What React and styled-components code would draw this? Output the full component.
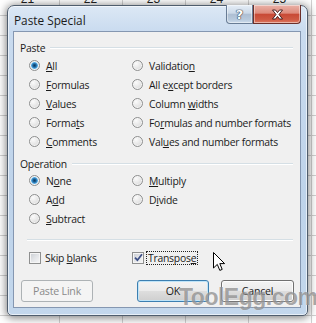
import React from 'react';
import styled, { createGlobalStyle } from 'styled-components';

const Global = createGlobalStyle`
  html, body { margin: 0; padding: 0; }
  body {
    width: 316px; height: 323px; overflow: hidden; background: #fff;
    font-family: "Open Sans", "Noto Sans", sans-serif;
  }
`;

const Sheet = styled.div`
  width: 316px;
  height: 323px;
  overflow: hidden;
  background-color: #fff;
  background-image:
    linear-gradient(to right, #d2d2d2 1px, transparent 1px),
    linear-gradient(to bottom, #d2d2d2 1px, transparent 1px);
  background-size: 63px 20px;
  background-position: 59px 15px;
`;

const NumberRow = styled.div`
  height: 5px;
  overflow: hidden;
  display: grid;
  grid-template-columns: repeat(5, 63px);
  margin-left: -4px;
`;

const Num = styled.span`
  display: block;
  margin-top: -7px;
  text-align: center;
  font-family: "Liberation Sans", Arial, sans-serif;
  font-size: 12px;
  line-height: 12px;
  color: #222;
`;

const Window = styled.div`
  position: relative;
  margin-left: 7px;
  width: 301px;
  height: 311px;
  box-sizing: border-box;
  border: 1px solid #4f5d6d;
  border-radius: 7px 7px 5px 5px;
  background: linear-gradient(to bottom, #dce8f5 0px, #c9dbef 26px, #bed3ea 60%, #c3d7ec 100%);
  box-shadow: 0 1px 8px 1px rgba(0, 0, 0, 0.5), inset 0 0 0 1px rgba(255, 255, 255, 0.6);
  display: flex;
  flex-direction: column;
  padding: 0 6px 7px 5px;
`;

const TitleBar = styled.div`
  height: 25px;
  display: flex;
  align-items: flex-start;
  justify-content: space-between;
  flex: none;
`;

const Title = styled.span`
  margin: 6px 0 0 1px;
  font-size: 11.8px;
  line-height: 16px;
  color: #1b1b1b;
`;

const CaptionButtons = styled.div`
  display: flex;
  margin-top: -1px;
  height: 19px;
`;

const CaptionButton = styled.div`
  box-sizing: border-box;
  height: 19px;
  width: ${p => p.$w}px;
  display: flex;
  align-items: center;
  justify-content: center;
  border: 1px solid ${p => (p.$close ? '#6b2f2a' : '#687c95')};
  border-top: none;
  border-radius: ${p => (p.$close ? '0 0 4px 0' : '0 0 0 4px')};
  background: ${p =>
    p.$close
      ? 'linear-gradient(to bottom, #eab2a8 0%, #de8b7c 45%, #c84a36 52%, #cf5943 80%, #dd7a62 100%)'
      : 'linear-gradient(to bottom, #e6eef7 0%, #cbd9e8 45%, #aebfd3 52%, #b7c9dc 80%, #cddcec 100%)'};
  box-shadow: inset 0 0 0 1px rgba(255, 255, 255, 0.45);
`;

const HelpGlyph = styled.span`
  font-family: "DejaVu Sans", sans-serif;
  font-weight: bold;
  font-size: 13px;
  line-height: 13px;
  color: #fff;
  text-shadow: 0 0 1px #2b3a4c, 0 0 1px #2b3a4c, 0 0 1px #2b3a4c;
`;

const Client = styled.div`
  flex: 1;
  border: 1px solid #8597b1;
  background: #f0f0f0;
  display: flex;
  flex-direction: column;
`;

const GroupHeader = styled.div`
  display: flex;
  align-items: center;
  gap: 5px;
  padding: 0 7px 0 6px;
  margin-top: ${p => p.$top}px;
  height: 14px;
`;

const Label = styled.span`
  font-size: 10.4px;
  line-height: 14px;
  color: #1b1b1b;
  letter-spacing: -0.25px;
  white-space: nowrap;
`;

const Rule = styled.div`
  flex: 1;
  height: 0;
  border-top: 1px solid #d5dfe5;
  border-bottom: 1px solid #fff;
`;

const Divider = styled.div`
  margin: ${p => p.$top}px 7px 0 13px;
  border-top: 1px solid #d5dfe5;
  border-bottom: 1px solid #fff;
`;

const OptionGrid = styled.div`
  display: grid;
  grid-template-columns: 103px 1fr;
  grid-template-rows: repeat(${p => p.$rows}, 19px);
  grid-auto-flow: column;
  padding-left: 15px;
  margin-top: ${p => p.$top}px;
`;

const Option = styled.div`
  display: flex;
  align-items: center;
  gap: ${p => p.$gap}px;
`;

const Radio = styled.span`
  flex: none;
  width: 11px;
  height: 11px;
  box-sizing: border-box;
  border-radius: 50%;
  border: 1px solid #8e8f8f;
  background: ${p =>
    p.$checked
      ? 'radial-gradient(circle at 50% 50%, #0c3a60 0, #1b5f95 1.5px, #4ea7e2 3px, #9fcff0 3.6px, #e3e3e3 4px, #f7f7f7 100%)'
      : 'radial-gradient(circle at 35% 30%, #fbfbfb 0, #e9e9e9 45%, #d0d0d0 100%)'};
  box-shadow: inset 0 0 0 1px #f6f6f6;
`;

const Check = styled.span`
  flex: none;
  width: 12px;
  height: 12px;
  box-sizing: border-box;
  border: 1px solid #8e8f8f;
  background: linear-gradient(135deg, #c9ccd2 0%, #e3e5e8 50%, #f7f7f7 100%);
  box-shadow: inset 0 0 0 1px #f5f5f5;
  display: flex;
  align-items: center;
  justify-content: center;
`;

const Focusable = styled.span`
  font-size: 10.4px;
  line-height: 12px;
  color: #1b1b1b;
  letter-spacing: -0.25px;
  padding: 0 1px;
  border: 1px dotted ${p => (p.$focus ? '#222' : 'transparent')};
  white-space: nowrap;
`;

const Key = styled.span`
  text-decoration: underline;
  text-underline-offset: 1px;
`;

const ButtonRow = styled.div`
  display: flex;
  justify-content: space-between;
  padding: 0 6px 0 7px;
  margin-top: 13px;
`;

const ButtonGroup = styled.div`
  display: flex;
  gap: 12px;
`;

const PushButton = styled.div`
  box-sizing: border-box;
  width: ${p => p.$w || 72}px;
  height: 22px;
  border-radius: 3px;
  display: flex;
  align-items: center;
  justify-content: center;
  font-size: 10.6px;
  letter-spacing: -0.2px;
  color: ${p => (p.$disabled ? '#8a8a8a' : '#1b1b1b')};
  border: 1px solid ${p => (p.$disabled ? '#adb2b5' : p.$default ? '#3c7fb1' : '#707070')};
  background: ${p =>
    p.$disabled
      ? '#f4f4f4'
      : 'linear-gradient(to bottom, #f3f3f3 0%, #ebebeb 48%, #dddddd 52%, #cfcfcf 100%)'};
  box-shadow: ${p =>
    p.$disabled ? 'none' : p.$default ? 'inset 0 0 0 1px #bfe4f8' : 'inset 0 0 0 1px #fcfcfc'};
`;

const Watermark = styled.div`
  position: absolute;
  left: 171px;
  top: 278px;
  font-family: "Liberation Sans", Arial, sans-serif;
  font-weight: bold;
  font-size: 23px;
  letter-spacing: -0.5px;
  color: rgba(95, 95, 95, 0.55);
  text-shadow: 0 0 1px rgba(255, 255, 255, 0.6);
  pointer-events: none;
`;

const Cursor = styled.svg`
  position: absolute;
  left: 205px;
  top: 246px;
`;

const pasteOptions = [
  [<><Key>A</Key>ll</>, true],
  [<><Key>F</Key>ormulas</>],
  [<><Key>V</Key>alues</>],
  [<>Forma<Key>t</Key>s</>],
  [<><Key>C</Key>omments</>],
  [<>Validatio<Key>n</Key></>],
  [<>All e<Key>x</Key>cept borders</>],
  [<>Column <Key>w</Key>idths</>],
  [<>Fo<Key>r</Key>mulas and number formats</>],
  [<>Val<Key>u</Key>es and number formats</>],
];

const opOptions = [
  [<>N<Key>o</Key>ne</>, true],
  [<>A<Key>d</Key>d</>],
  [<><Key>S</Key>ubtract</>],
  [<><Key>M</Key>ultiply</>],
  [<>D<Key>i</Key>vide</>],
];

function RadioOption({ label, checked }) {
  return (
    <Option $gap={6}>
      <Radio $checked={checked} />
      <Label>{label}</Label>
    </Option>
  );
}

function CheckOption({ label, checked, focus }) {
  return (
    <Option $gap={2}>
      <Check>
        {checked && (
          <svg width="9" height="9" viewBox="0 0 9 9">
            <path d="M1 4.6 L3.4 7.2 L8 1.2" fill="none" stroke="#3d4f86" strokeWidth="1.8" />
          </svg>
        )}
      </Check>
      <Focusable $focus={focus}>{label}</Focusable>
    </Option>
  );
}

export default function App() {
  return (
    <>
      <Global />
      <Sheet>
        <NumberRow>
          {['21', '22', '23', '24', '25'].map(n => (
            <Num key={n}>{n}</Num>
          ))}
        </NumberRow>
        <Window>
          <TitleBar>
            <Title>Paste Special</Title>
            <CaptionButtons>
              <CaptionButton $w={27}>
                <HelpGlyph>?</HelpGlyph>
              </CaptionButton>
              <CaptionButton $w={48} $close>
                <svg width="13" height="11" viewBox="0 0 13 11">
                  <path
                    d="M1.5 1 L4.5 1 L6.5 3.6 L8.5 1 L11.5 1 L8 5.5 L11.5 10 L8.5 10 L6.5 7.4 L4.5 10 L1.5 10 L5 5.5 Z"
                    fill="#fff"
                    stroke="#3a1414"
                    strokeWidth="0.9"
                    strokeLinejoin="round"
                  />
                </svg>
              </CaptionButton>
            </CaptionButtons>
          </TitleBar>
          <Client>
            <GroupHeader $top={9}>
              <Label>Paste</Label>
              <Rule />
            </GroupHeader>
            <OptionGrid $rows={5} $top={1}>
              {pasteOptions.map(([l, c], i) => (
                <RadioOption key={i} label={l} checked={c} />
              ))}
            </OptionGrid>
            <GroupHeader $top={6}>
              <Label>Operation</Label>
              <Rule />
            </GroupHeader>
            <OptionGrid $rows={3} $top={0}>
              {opOptions.map(([l, c], i) => (
                <RadioOption key={i} label={l} checked={c} />
              ))}
            </OptionGrid>
            <Divider $top={11} />
            <OptionGrid $rows={1} $top={7}>
              <CheckOption label={<>Skip <Key>b</Key>lanks</>} />
              <CheckOption label={<>Transpos<Key>e</Key></>} checked focus />
            </OptionGrid>
            <ButtonRow>
              <PushButton $disabled>Paste Link</PushButton>
              <ButtonGroup>
                <PushButton $default>OK</PushButton>
                <PushButton $w={73}>Cancel</PushButton>
              </ButtonGroup>
            </ButtonRow>
          </Client>
          <Watermark>ToolEgg.com</Watermark>
          <Cursor width="13" height="20" viewBox="0 0 13 20">
            <path
              d="M0.5 0.5 L0.5 16 L4.3 12.4 L6.8 18.4 L9.2 17.4 L6.8 11.6 L11.6 11.6 Z"
              fill="#fff"
              stroke="#000"
              strokeWidth="1"
              strokeLinejoin="miter"
            />
          </Cursor>
        </Window>
      </Sheet>
    </>
  );
}
